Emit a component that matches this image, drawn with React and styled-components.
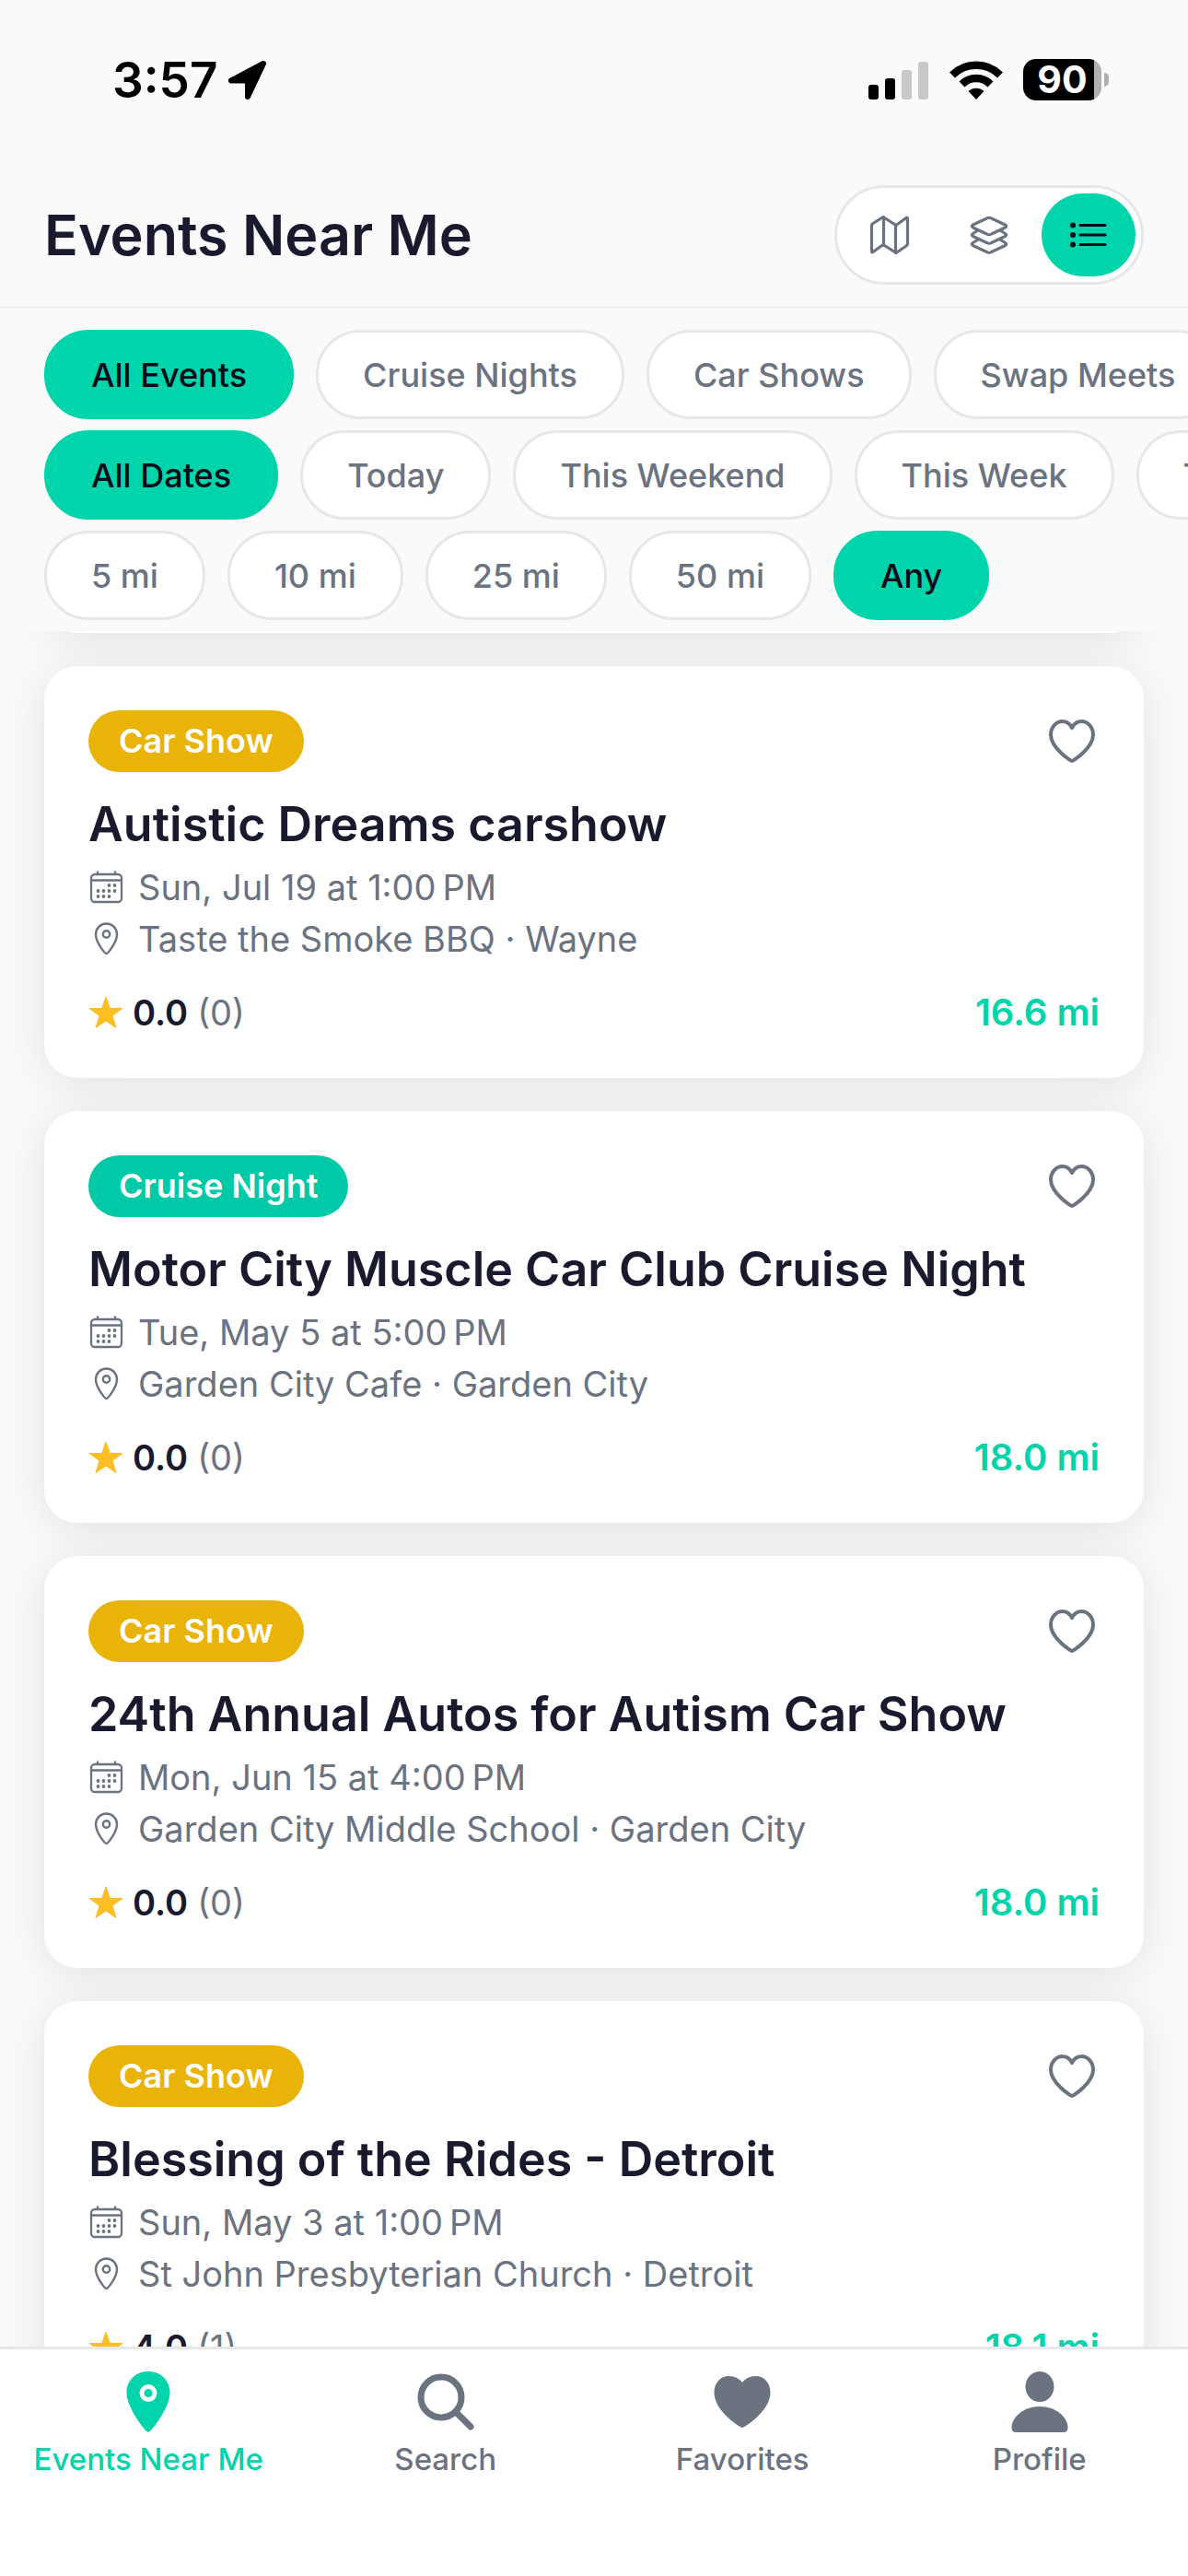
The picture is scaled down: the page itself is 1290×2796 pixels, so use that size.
import React from "react";
import styled, { createGlobalStyle } from "styled-components";

const c = { accent: "#00d4aa", ink: "#1a1a2e", muted: "#6b7280", line: "#e5e7eb", page: "#fafafa", gold: "#eab308", star: "#fbbf24" };

const Global = createGlobalStyle`
  * { box-sizing: border-box; }
  html, body { margin: 0; height: 100%; }
  #root { height: 100vh; }
  body { background: ${c.page}; color: ${c.ink}; font-family: Inter, "Liberation Sans", sans-serif; overflow: hidden; }
  button { font: inherit; margin: 0; padding: 0; border: 0; background: none; cursor: pointer; }
  h1, h2, p, ul { margin: 0; padding: 0; }
  svg { display: block; flex: none; }
`;
const Screen = styled.div`display: flex; flex-direction: column; height: 100%;`;
const StatusBar = styled.div`
  display: flex; align-items: center; justify-content: space-between;
  height: 177px; padding: 0 86px 4px 122px; color: #000;
`;
const StatusGroup = styled.div`display: flex; align-items: center; gap: ${(p) => p.$gap}px;`;
const Clock = styled.span`font-size: 53px; font-weight: 600; line-height: 60px;`;
const Header = styled.header`
  display: flex; align-items: center; justify-content: space-between;
  height: 157px; padding: 0 48px; border-bottom: 1px solid ${c.line};
`;
const Title = styled.h1`font-size: 61px; font-weight: 600; line-height: 76px;`;
const Segments = styled.div`
  display: flex; gap: 6px; padding: 6px; background: #fff;
  border: 3px solid ${c.line}; border-radius: 54px;
`;
const Segment = styled.button`
  display: flex; align-items: center; justify-content: center;
  width: 102px; height: 90px; border-radius: 45px;
  background: ${(p) => (p.$active ? c.accent : "transparent")};
  color: ${(p) => (p.$active ? "#0a0a1a" : c.muted)};
`;
const Filters = styled.div`display: flex; flex-direction: column; gap: 12px; padding: 24px 0 12px;`;
const ChipRow = styled.div`display: flex; gap: 24px; padding: 0 48px; overflow: hidden;`;
const Chip = styled.button`
  flex: none; height: 97px; padding: 0 48px; border-radius: 48px; white-space: nowrap;
  border: 3px solid ${(p) => (p.$active ? c.accent : c.line)};
  background: ${(p) => (p.$active ? c.accent : "#fff")};
  color: ${(p) => (p.$active ? "#0a0a1a" : c.muted)};
  font-size: 36px; font-weight: 500; line-height: 44px;
`;
const List = styled.main`
  flex: 1; min-height: 0; overflow: hidden; padding: 0 48px;
  display: flex; flex-direction: column; gap: 36px;
`;
const cardShadow = "0 6px 48px rgba(0, 0, 0, 0.1)";
const PastCard = styled.div`
  flex: none; height: 48px; margin-top: -46px; background: #fff;
  border-radius: 0 0 36px 36px; box-shadow: ${cardShadow};
`;
const Card = styled.article`
  flex: none; padding: 48px 48px 47px; background: #fff; border-radius: 36px; box-shadow: ${cardShadow};
`;
const CardTop = styled.div`display: flex; align-items: center; justify-content: space-between; height: 67px;`;
const Tag = styled.span`
  padding: 0 33px; border-radius: 34px; background: ${(p) => p.$color}; color: #fff;
  font-size: 36px; font-weight: 600; line-height: 67px;
`;
const LikeButton = styled.button`
  display: flex; align-items: center; justify-content: center; width: 60px; height: 60px; color: ${c.muted};
`;
const CardTitle = styled.h2`margin-top: 24px; font-size: 52px; font-weight: 600; line-height: 66px;`;
const Detail = styled.p`
  display: flex; align-items: center; gap: 15px; margin-top: ${(p) => p.$top}px;
  color: ${c.muted}; font-size: 38px; line-height: 48px;
`;
const CardFoot = styled.div`
  display: flex; align-items: center; justify-content: space-between; margin-top: 32px;
  font-size: 38px; line-height: 48px;
`;
const Rating = styled.div`display: flex; align-items: center; gap: 10px;`;
const Score = styled.span`font-weight: 600;`;
const Count = styled.span`color: ${c.muted};`;
const Distance = styled.span`color: ${c.accent}; font-size: 40px; font-weight: 600;`;
const TabBar = styled.nav`
  display: grid; grid-template-columns: repeat(4, 1fr); height: 249px; flex: none;
  background: #fff; border-top: 3px solid ${c.line};
`;
const Tab = styled.a`
  display: flex; flex-direction: column; align-items: center; padding-top: 24px; gap: 8px;
  text-decoration: none; color: ${(p) => (p.$active ? c.accent : c.muted)};
  font-size: 33px; font-weight: 500; line-height: 42px;
`;

const Arrow = () => (
  <svg width="44" height="44" viewBox="0 0 44 44" fill="currentColor" stroke="currentColor" strokeWidth="6" strokeLinejoin="round">
    <path d="M39 4 4 22.500H22V40Z" />
  </svg>
);
const Signal = () => (
  <svg width="66" height="42" viewBox="0 0 66 42">
    <rect x="0" y="26" width="11" height="16" rx="3" />
    <rect x="18" y="19" width="11" height="23" rx="3" />
    <rect x="36" y="10" width="11" height="32" rx="3" fill="#c8c8c8" />
    <rect x="54" y="1" width="11" height="41" rx="3" fill="#c8c8c8" />
  </svg>
);
const Wifi = () => (
  <svg width="58" height="42" viewBox="0 0 58 42">
    <g fill="none" stroke="#000" strokeWidth="8.500">
      <path d="M3 15.500A37 37 0 0 1 55 15.500" />
      <path d="M13.500 25.500A22 22 0 0 1 44.500 25.500" />
    </g>
    <path d="M29 42 20.500 33A12.500 12.500 0 0 1 37.500 33Z" />
  </svg>
);
const BatteryBox = styled.span`display: flex; align-items: center; gap: 3px;`;
const BatteryBody = styled.span`
  width: 85px; height: 45px; border-radius: 14px; text-align: center;
  background: linear-gradient(90deg, #000 77px, #b0b0b0 77px);
  color: #fff; font-size: 41px; font-weight: 700; line-height: 45px;
`;
const BatteryCap = styled.span`width: 5px; height: 15px; border-radius: 0 5px 5px 0; background: #b0b0b0;`;

const line = { fill: "none", stroke: "currentColor", strokeLinecap: "round", strokeLinejoin: "round" };
const MapIcon = () => (
  <svg width="46" height="46" viewBox="0 0 46 46" {...line} strokeWidth="3.200">
    <path d="M3.500 12.500Q3.500 11.500 5 10.500L16 3.500 30 12.500 41 4.500Q42.500 3.500 42.500 5.500V32.500Q42.500 34 41 35L30 42.500 16 33.500 5 41.500Q3.500 42.500 3.500 40.500Z M16.500 3.500V33.500M29.500 12.500V42.500" />
  </svg>
);
const LayersIcon = () => (
  <svg width="42" height="42" viewBox="0 0 42 42" {...line} strokeWidth="3.200">
    <path d="M18.500 3Q21 1.500 23.500 3L38.500 10Q41 11.500 38.500 13L23.500 20Q21 21.500 18.500 20L3.500 13Q1 11.500 3.500 10Z" />
    <path d="M9 16 3.500 19.500Q1 21 3.500 22.500L18.500 29.500Q21 31 23.500 29.500L38.500 22.500Q41 21 38.500 19.500L33 16" />
    <path d="M9 26 3.500 29.500Q1 31 3.500 32.500L18.500 39.500Q21 41 23.500 39.500L38.500 32.500Q41 31 38.500 29.500L33 26" />
  </svg>
);
const ListIcon = () => (
  <svg width="42" height="30" viewBox="0 0 42 30" {...line} strokeWidth="3">
    <path d="M12 4.500H39M12 15H39M12 25.500H39" />
    <g fill="currentColor" stroke="none"><circle cx="4" cy="4.500" r="3" /><circle cx="4" cy="15" r="3" /><circle cx="4" cy="25.500" r="3" /></g>
  </svg>
);
const HeartPath = "M25 45C24 45 2 31 2 16.500 2 8 8 2 14.500 2 19 2 23 5 25 9 27 5 31 2 35.500 2 42 2 48 8 48 16.500 48 31 26 45 25 45Z";
const HeartOutline = () => (
  <svg width="50" height="47" viewBox="0 0 50 47" {...line} strokeWidth="4"><path d={HeartPath} /></svg>
);
const CalendarIcon = () => (
  <svg width="39" height="36" viewBox="-1 0 39 36" {...line} strokeWidth="2.300">
    <rect x="2" y="4" width="33" height="30" rx="4" /><path d="M2 10.500H35M9 1.500V4M28 1.500V4" />
    <g fill="currentColor" stroke="none">
      {[[21.500, 16], [27.500, 16], [9.500, 22], [15.500, 22], [21.500, 22], [27.500, 22], [9.500, 28], [15.500, 28], [21.500, 28]].map(([x, y]) => <circle key={x + "-" + y} cx={x} cy={y} r="1.900" />)}
    </g>
  </svg>
);
const PinOutline = () => (
  <svg width="39" height="36" viewBox="-1 0 39 36" {...line} strokeWidth="2.400">
    <path d="M18.500 34C17 34 7 22 7 13A11.500 11.500 0 0 1 30 13C30 22 20 34 18.500 34Z" /><circle cx="18.500" cy="13" r="3.700" />
  </svg>
);
const StarIcon = () => (
  <svg width="38" height="36" viewBox="-1 0 38 36" fill={c.star} stroke={c.star} strokeWidth="1" strokeLinejoin="round">
    <path d="M18 1 22.300 13.500H36L25 21.500 29 34.500 18 27 7 34.500 11 21.500 0 13.500H13.700Z" />
  </svg>
);
const tabIcons = {
  pin: <path fillRule="evenodd" d="M33 0C47 0 56.500 10 56.500 23 56.500 39 36 66 33 66S9.500 39 9.500 23C9.500 10 19 0 33 0Z M33 14A9.500 9.500 0 1 0 33 33A9.500 9.500 0 1 0 33 14Z M33 19A4.500 4.500 0 1 1 33 28A4.500 4.500 0 1 1 33 19Z" />,
  search: <g {...line} strokeWidth="7"><circle cx="28" cy="28" r="22" /><path d="M44 44 60 60" /></g>,
  heart: <path d="M33 61C31 61 2.500 43 2.500 23 2.500 12 9.500 5 18.500 5 25 5 30 8 33 12 36 8 41 5 47.500 5 56.500 5 63.500 12 63.500 23 63.500 43 35 61 33 61Z" />,
  person: <g><ellipse cx="33" cy="16.500" rx="15.500" ry="16.500" /><path d="M33 38C51 38 63.500 50 63.500 61 63.500 64 62 66 59 66H7C4 66 2.500 64 2.500 61 2.500 50 15 38 33 38Z" /></g>,
};
const TabIcon = ({ name }) => <svg width="66" height="66" viewBox="0 0 66 66" fill="currentColor">{tabIcons[name]}</svg>;

const filterRows = [
  { label: "Event type", active: "All Events", items: ["All Events", "Cruise Nights", "Car Shows", "Swap Meets"] },
  { label: "Date", active: "All Dates", items: ["All Dates", "Today", "This Weekend", "This Week", "This Month"] },
  { label: "Distance", active: "Any", items: ["5 mi", "10 mi", "25 mi", "50 mi", "Any"] },
];
const events = [
  { type: "Car Show", title: "Autistic Dreams carshow", date: "Sun, Jul 19 at 1:00\u202fPM", place: "Taste the Smoke BBQ · Wayne", score: "0.0", count: 0, distance: "16.6 mi" },
  { type: "Cruise Night", title: "Motor City Muscle Car Club Cruise Night", date: "Tue, May 5 at 5:00\u202fPM", place: "Garden City Cafe · Garden City", score: "0.0", count: 0, distance: "18.0 mi" },
  { type: "Car Show", title: "24th Annual Autos for Autism Car Show", date: "Mon, Jun 15 at 4:00\u202fPM", place: "Garden City Middle School · Garden City", score: "0.0", count: 0, distance: "18.0 mi" },
  { type: "Car Show", title: "Blessing of the Rides - Detroit", date: "Sun, May 3 at 1:00\u202fPM", place: "St John Presbyterian Church · Detroit", score: "4.0", count: 1, distance: "18.1 mi" },
];
const tabs = [["pin", "Events Near Me"], ["search", "Search"], ["heart", "Favorites"], ["person", "Profile"]];

function EventCard({ event }) {
  return (
    <Card>
      <CardTop>
        <Tag $color={event.type === "Car Show" ? c.gold : "#00c9a7"}>{event.type}</Tag>
        <LikeButton aria-label={"Save " + event.title}><HeartOutline /></LikeButton>
      </CardTop>
      <CardTitle>{event.title}</CardTitle>
      <Detail $top={11}><CalendarIcon />{event.date}</Detail>
      <Detail $top={8}><PinOutline />{event.place}</Detail>
      <CardFoot>
        <Rating><StarIcon /><Score>{event.score}</Score><Count>({event.count})</Count></Rating>
        <Distance>{event.distance}</Distance>
      </CardFoot>
    </Card>
  );
}

export default function App() {
  return (
    <Screen>
      <Global />
      <StatusBar>
        <StatusGroup $gap={10}><Clock>3:57</Clock><Arrow /></StatusGroup>
        <StatusGroup $gap={22}>
          <Signal /><Wifi />
          <BatteryBox><BatteryBody>90</BatteryBody><BatteryCap /></BatteryBox>
        </StatusGroup>
      </StatusBar>
      <Header>
        <Title>Events Near Me</Title>
        <Segments>
          <Segment aria-label="Map"><MapIcon /></Segment>
          <Segment aria-label="Layers"><LayersIcon /></Segment>
          <Segment aria-label="List" $active><ListIcon /></Segment>
        </Segments>
      </Header>
      <Filters>
        {filterRows.map((row) => (
          <ChipRow key={row.label} role="group" aria-label={row.label}>
            {row.items.map((item) => <Chip key={item} $active={item === row.active}>{item}</Chip>)}
          </ChipRow>
        ))}
      </Filters>
      <List>
        <PastCard />
        {events.map((event) => <EventCard key={event.title} event={event} />)}
      </List>
      <TabBar>
        {tabs.map(([icon, label], i) => <Tab key={label} href={"#" + icon} $active={i === 0}><TabIcon name={icon} />{label}</Tab>)}
      </TabBar>
    </Screen>
  );
}
